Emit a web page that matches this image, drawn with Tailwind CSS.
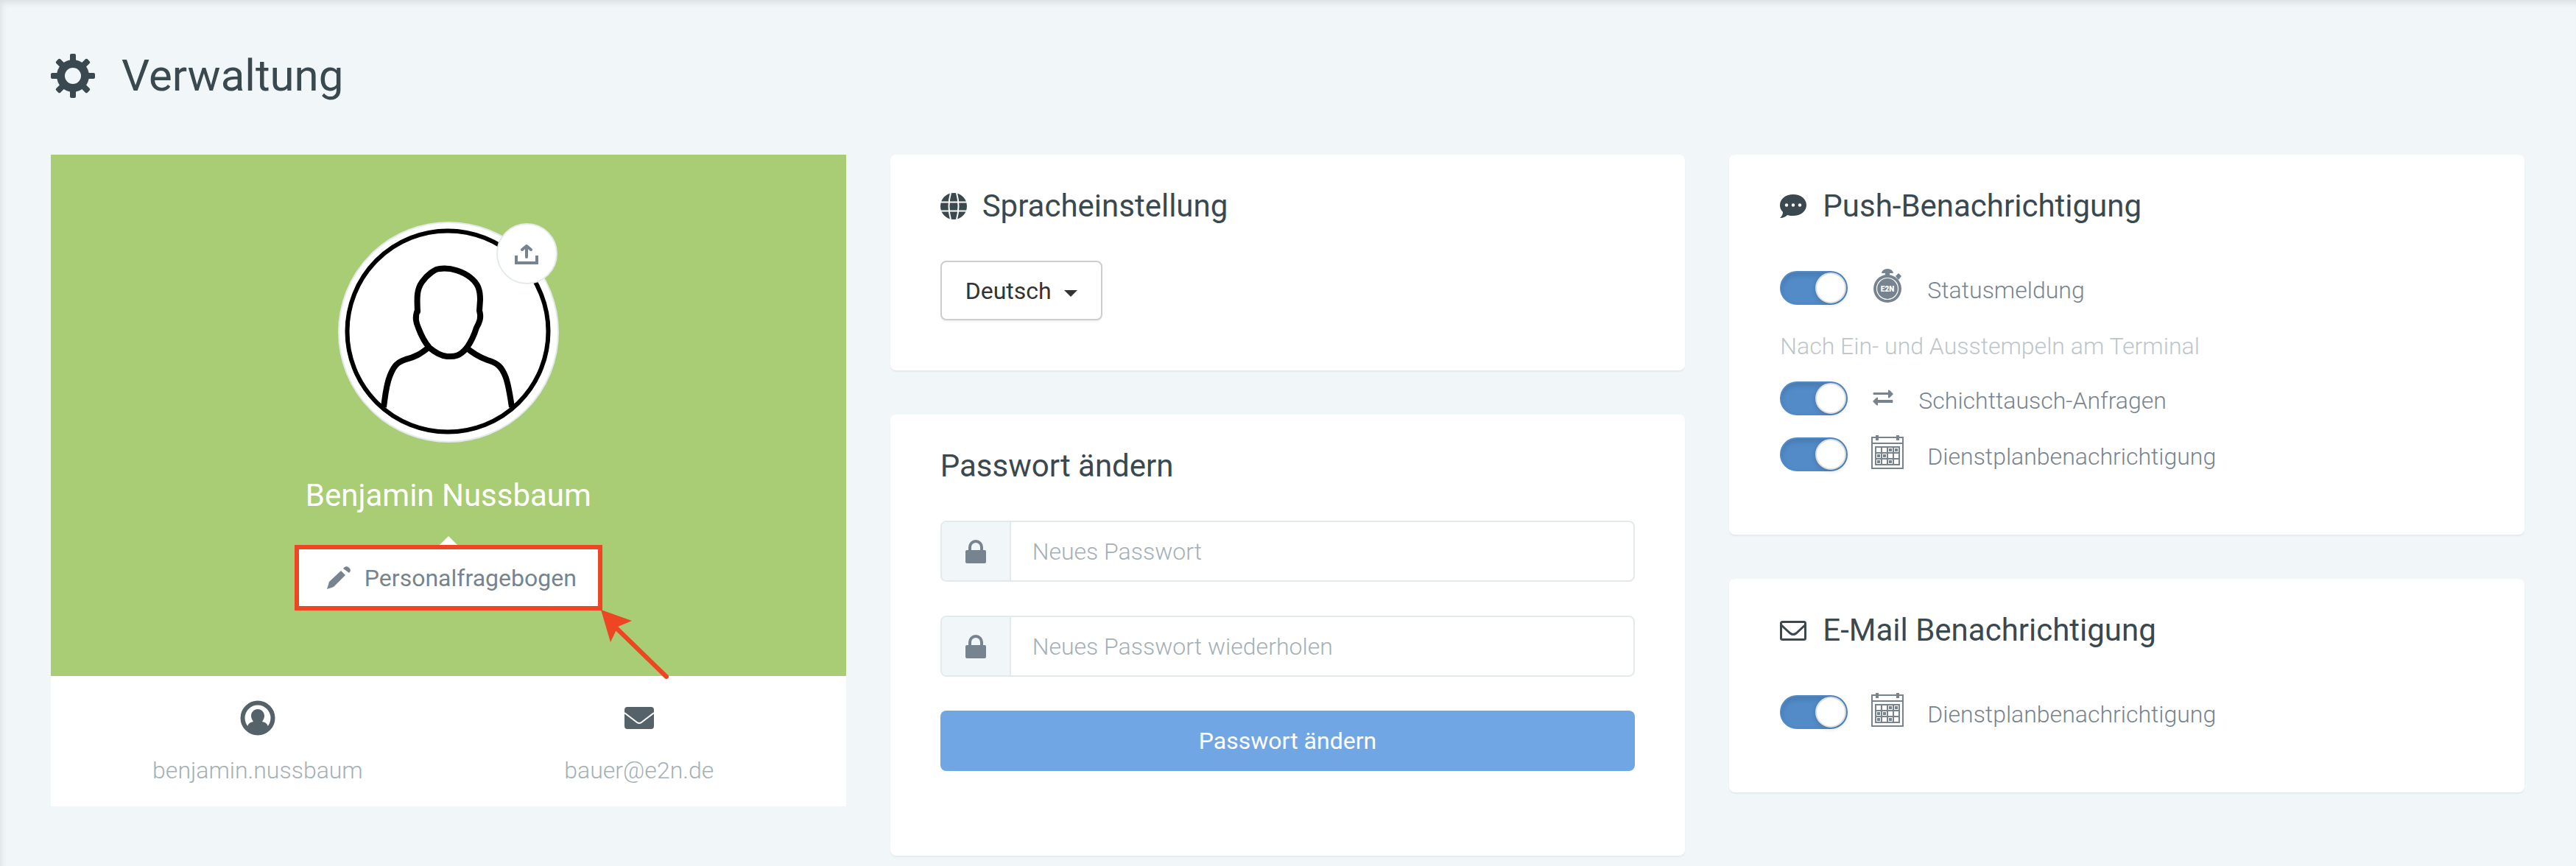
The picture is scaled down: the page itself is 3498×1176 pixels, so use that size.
<!DOCTYPE html>
<html lang="de">
<head>
<meta charset="utf-8">
<title>Verwaltung</title>
<script src="https://cdn.jsdelivr.net/npm/@tailwindcss/browser@4"></script>
</head>
<body class="min-h-screen bg-[#f1f6f9] font-[Roboto,sans-serif] text-[32px] leading-[44px] font-light text-[#778490] shadow-[inset_4px_6px_8px_-2px_rgba(0,0,0,0.09)]">
<svg class="hidden">
  <symbol id="calendar" viewBox="0 0 44 46">
    <path fill="none" stroke="currentColor" stroke-width="2" d="M1 3h42v42H1zM1 11h42"/>
    <path fill="none" stroke="currentColor" stroke-width="2" d="M6 16h32v24H6zM14 16v24M22 16v24M30 16v24M6 24h32M6 32h32"/>
    <path fill="currentColor" d="M6 0h4v7H6zM34 0h4v7h-4zM24 18h4v4h-4zM32 18h4v4h-4zM8 26h4v4H8zM16 26h4v4h-4zM8 34h4v4H8zM24 34h4v4h-4z"/>
  </symbol>
  <symbol id="lock" viewBox="0 0 28 32">
    <path fill="currentColor" d="M2 14h2v-4a10 10 0 0 1 20 0v4h2a2 2 0 0 1 2 2v14a2 2 0 0 1-2 2H2a2 2 0 0 1-2-2V16a2 2 0 0 1 2-2zM8 14h12v-4a6 6 0 0 0-12 0z"/>
  </symbol>
</svg>

<header class="flex items-center gap-9 px-[69px] pt-[67px] pb-[71px] text-[#3a484f]">
  <svg class="size-[60px]" viewBox="0 0 60 60" fill="currentColor">
    <g id="teeth"><rect x="26" y="0" width="8" height="60" rx="2"/><rect x="0" y="26" width="60" height="8" rx="2"/></g>
    <use href="#teeth" transform="rotate(45 30 30)"/>
    <circle cx="30" cy="30" r="22"/><circle cx="30" cy="30" r="11" fill="#f1f6f9"/>
  </svg>
  <h1 class="text-[60px] leading-[72px] font-normal">Verwaltung</h1>
</header>

<main class="grid grid-cols-3 items-start gap-[60px] pr-[70px] pl-[69px]">
  <section class="bg-white">
    <div class="flex flex-col items-center bg-[#a8cd74] pt-[91px] pb-[89px]">
      <div class="relative size-[300px] rounded-full border-2 border-[#e4eaec] bg-white">
        <svg class="size-full" viewBox="0 0 296 296" fill="none" stroke="#000" stroke-width="6">
          <circle cx="147" cy="147" r="136.500"/>
          <path stroke-width="8" stroke-linejoin="round" d="M106 120C105 100 105 90 112 80C119 70 130 62 136 62C152 60 168 66 178 74C188 82 191 90 191 104L190 119C193 128 190 135 186 142C182 155 178 162 173 169C162 183 153 181 146 181C138 180 130 176 122 169C114 160 110 150 107 142C104 135 102 128 106 118z"/>
          <path stroke-width="8" d="M122 168C110 178 102 182 90 185C78 189 74 194 69 206C63 220 62 236 60 250M171 168C180 176 190 182 201 186C214 190 220 194 226 210C230 222 232 236 234 250"/>
        </svg>
        <button aria-label="Bild hochladen" class="absolute top-0 right-0 flex size-[83px] items-center justify-center rounded-full border-2 border-[#e4eaec] bg-white">
          <svg class="h-7 w-8" viewBox="0 0 32 28" fill="none" stroke="#778490" stroke-width="4"><path d="M2 16v10h28V16"/><path d="M16 18V3M10 8l6-5 6 5" stroke-linejoin="round" stroke-linecap="round"/></svg>
        </button>
      </div>
      <h2 class="mt-[46px] text-[42px] leading-[52px] font-normal text-white">Benjamin Nussbaum</h2>
      <div class="relative mt-[41px] border-6 border-[#ee4523] bg-white">
        <svg class="absolute -top-[18px] left-1/2 h-3 w-6 -translate-x-1/2" viewBox="0 0 24 12"><path d="M0 12L12 0l12 12z" fill="#fff"/></svg>
        <a href="#" class="flex h-[77px] items-center gap-[19px] pr-[29px] pl-[38px] font-normal">
          <svg class="size-8" viewBox="0 0 32 32" fill="currentColor"><path d="M0 31L3 21 19 6l6 6L9 28zM22 3c3-4 6-3 8-1s3 4 0 7z"/></svg>
          Personalfragebogen</a>
        <svg class="absolute top-[80px] left-[408px] h-[100px] w-[96px]" viewBox="0 0 96 100"><path d="M2 2L44 17 25 25 15 46z" fill="#ee4523"/><path d="M22 26L91 93" stroke="#ee4523" stroke-width="6" stroke-linecap="round"/></svg>
      </div>
    </div>
    <div class="grid grid-cols-2 px-[22px] pt-[33px] pb-[27px] text-center text-[#a3b0b6]">
      <div class="flex flex-col items-center gap-[25px]">
        <svg class="size-[48px]" viewBox="0 0 48 48" fill="#55626a"><circle cx="24" cy="24" r="20.500" fill="none" stroke="#55626a" stroke-width="6"/><path d="M24 12c5 0 9 4 9 9 0 4-2 6-3 8 5 1 7 3 8 7l2 2c-4 5-10 8-16 8s-12-3-16-8l2-2c1-4 3-6 8-7-1-2-3-4-3-8 0-5 4-9 9-9z"/></svg>
        <span>benjamin.nussbaum</span>
      </div>
      <div class="flex flex-col items-center gap-[25px]">
        <svg class="h-12 w-10" viewBox="0 -9 40 48"><rect y="0" width="40" height="30" rx="4" fill="#55626a"/><path d="M0 8l17 13q3 2 6 0L40 8" fill="none" stroke="#fff" stroke-width="2"/></svg>
        <span>bauer@e2n.de</span>
      </div>
    </div>
  </section>

  <div class="flex flex-col gap-[60px]">
    <section class="rounded-lg bg-white px-[68px] pt-[44px] pb-[68px] shadow-[0_2px_2px_rgba(0,0,0,0.05)]">
      <h2 class="flex items-center gap-[21px] text-[42px] leading-[52px] font-normal text-[#3a484f]">
        <svg class="h-10 w-9" viewBox="0 0 36 40"><ellipse cx="18" cy="20" rx="18" ry="18" fill="currentColor"/><path d="M0 14.500h36M0 26.500h36M14 2q-5 18 0 36M22 2q5 18 0 36" fill="none" stroke="#fff" stroke-width="2"/></svg>
        Spracheinstellung</h2>
      <div class="relative mt-12 w-fit">
        <select aria-label="Sprache" class="block h-[81px] w-[220px] appearance-none rounded-lg border-2 border-[#cccece] bg-white pl-8 font-normal text-[#333] shadow-[0_2px_2px_rgba(0,0,0,0.05)]"><option>Deutsch</option></select>
        <svg class="pointer-events-none absolute top-10 right-[34px] h-[9px] w-[18px]" viewBox="0 0 18 9"><path d="M0 0h18L9 9z" fill="#333"/></svg>
      </div>
    </section>
    <section class="rounded-lg bg-white px-[68px] pt-[44px] pb-[115px] shadow-[0_2px_2px_rgba(0,0,0,0.05)]">
      <h2 class="text-[42px] leading-[52px] font-normal text-[#3a484f]">Passwort ändern</h2>
      <form class="mt-12 flex flex-col gap-[46px]">
        <label class="flex h-[83px] overflow-hidden rounded-lg border-2 border-[#e4eaec]">
          <span class="flex w-[94px] items-center justify-center border-r-2 border-[#e4eaec] bg-[#f1f6f9]"><svg class="h-8 w-7"><use href="#lock"/></svg></span>
          <input type="password" aria-label="Neues Passwort" placeholder="Neues Passwort" class="min-w-0 flex-1 px-[29px] placeholder:text-[#a3b0b6]">
        </label>
        <label class="flex h-[83px] overflow-hidden rounded-lg border-2 border-[#e4eaec]">
          <span class="flex w-[94px] items-center justify-center border-r-2 border-[#e4eaec] bg-[#f1f6f9]"><svg class="h-8 w-7"><use href="#lock"/></svg></span>
          <input type="password" aria-label="Neues Passwort wiederholen" placeholder="Neues Passwort wiederholen" class="min-w-0 flex-1 px-[29px] placeholder:text-[#a3b0b6]">
        </label>
        <button class="h-[82px] rounded-lg bg-[#71a6e5] font-normal text-white">Passwort ändern</button>
      </form>
    </section>
  </div>

  <div class="flex flex-col gap-[60px]">
    <section class="rounded-lg bg-white px-[69px] pt-[44px] pb-[82px] shadow-[0_2px_2px_rgba(0,0,0,0.05)]">
      <h2 class="flex items-center gap-[22px] text-[42px] leading-[52px] font-normal text-[#3a484f]">
        <svg class="h-8 w-9" viewBox="0 0 36 32"><path d="M18 0c10 0 18 6 18 14.500S28 29 18 29c-3 0-5 0-8-1-2 2-5 4-10 4 3-3 4-5 4-8-3-3-4-6-4-9.500C0 6 8 0 18 0z" fill="currentColor"/><g fill="#fff"><circle cx="9" cy="14.500" r="2.200"/><circle cx="18" cy="14.500" r="2.200"/><circle cx="27" cy="14.500" r="2.200"/></g></svg>
        Push-Benachrichtigung</h2>
      <label class="mt-[59px] flex h-[53px] items-start">
        <input type="checkbox" checked class="mt-[3px] flex h-[46px] w-[92px] shrink-0 appearance-none justify-end rounded-full border-2 border-[#5089c6] bg-[#528bc8] shadow-[inset_0_4px_6px_rgba(0,0,0,0.12)] before:size-[42px] before:rounded-full before:border-2 before:border-[#dddddd] before:bg-white before:shadow-[0_2px_6px_rgba(0,0,0,0.15)] before:content-['']">
        <svg class="mr-[34px] ml-[34px] h-[46px] w-10" viewBox="0 0 40 46" fill="currentColor"><path d="M12 6a8 6 0 0 1 16 0h-5v3h-6V6zM31 10l4-4 4 4-4 5z"/><circle cx="20" cy="27" r="19"/><circle cx="20" cy="27" r="14.500" fill="none" stroke="#fff" stroke-width="1.200"/><text x="20" y="31" fill="#fff" font-size="10" font-weight="900" text-anchor="middle">E2N</text></svg>
        <span class="pt-[7px]">Statusmeldung</span>
      </label>
      <p class="mt-[30px] text-[#bcc6ca]">Nach Ein- und Ausstempeln am Terminal</p>
      <label class="mt-[23px] flex h-[53px] items-start">
        <input type="checkbox" checked class="mt-[3px] flex h-[46px] w-[92px] shrink-0 appearance-none justify-end rounded-full border-2 border-[#5089c6] bg-[#528bc8] shadow-[inset_0_4px_6px_rgba(0,0,0,0.12)] before:size-[42px] before:rounded-full before:border-2 before:border-[#dddddd] before:bg-white before:shadow-[0_2px_6px_rgba(0,0,0,0.15)] before:content-['']">
        <svg class="mt-[14px] mr-[34px] ml-[34px] h-[22px] w-7" viewBox="0 0 28 22" fill="currentColor"><path d="M1 4h20V1q0-1 2 0l5 5-5 5q-2 1-2 0V7H1q-1-1.500 0-3zM27 14H7v-3q0-1-2 0l-5 5 5 5q2 1 2 0v-3h20q1-2 0-4z"/></svg>
        <span class="pt-[7px]">Schichttausch-Anfragen</span>
      </label>
      <label class="mt-[23px] flex h-[53px] items-start">
        <input type="checkbox" checked class="mt-[3px] flex h-[46px] w-[92px] shrink-0 appearance-none justify-end rounded-full border-2 border-[#5089c6] bg-[#528bc8] shadow-[inset_0_4px_6px_rgba(0,0,0,0.12)] before:size-[42px] before:rounded-full before:border-2 before:border-[#dddddd] before:bg-white before:shadow-[0_2px_6px_rgba(0,0,0,0.15)] before:content-['']">
        <svg class="mr-8 ml-8 h-[46px] w-11"><use href="#calendar"/></svg>
        <span class="pt-[7px]">Dienstplanbenachrichtigung</span>
      </label>
    </section>
    <section class="rounded-lg bg-white px-[69px] pt-[44px] pb-[82px] shadow-[0_2px_2px_rgba(0,0,0,0.05)]">
      <h2 class="flex items-center gap-[22px] text-[42px] leading-[52px] font-normal text-[#3a484f]">
        <svg class="h-[27px] w-9" viewBox="0 0 36 27" fill="none" stroke="currentColor" stroke-width="3"><rect x="1.500" y="1.500" width="33" height="24" rx="2"/><path d="M2 6l12 11q4 3 8 0L34 6"/></svg>
        E-Mail Benachrichtigung</h2>
      <label class="mt-[59px] flex h-[53px] items-start">
        <input type="checkbox" checked class="mt-[3px] flex h-[46px] w-[92px] shrink-0 appearance-none justify-end rounded-full border-2 border-[#5089c6] bg-[#528bc8] shadow-[inset_0_4px_6px_rgba(0,0,0,0.12)] before:size-[42px] before:rounded-full before:border-2 before:border-[#dddddd] before:bg-white before:shadow-[0_2px_6px_rgba(0,0,0,0.15)] before:content-['']">
        <svg class="mr-8 ml-8 h-[46px] w-11"><use href="#calendar"/></svg>
        <span class="pt-[7px]">Dienstplanbenachrichtigung</span>
      </label>
    </section>
  </div>
</main>
</body>
</html>
